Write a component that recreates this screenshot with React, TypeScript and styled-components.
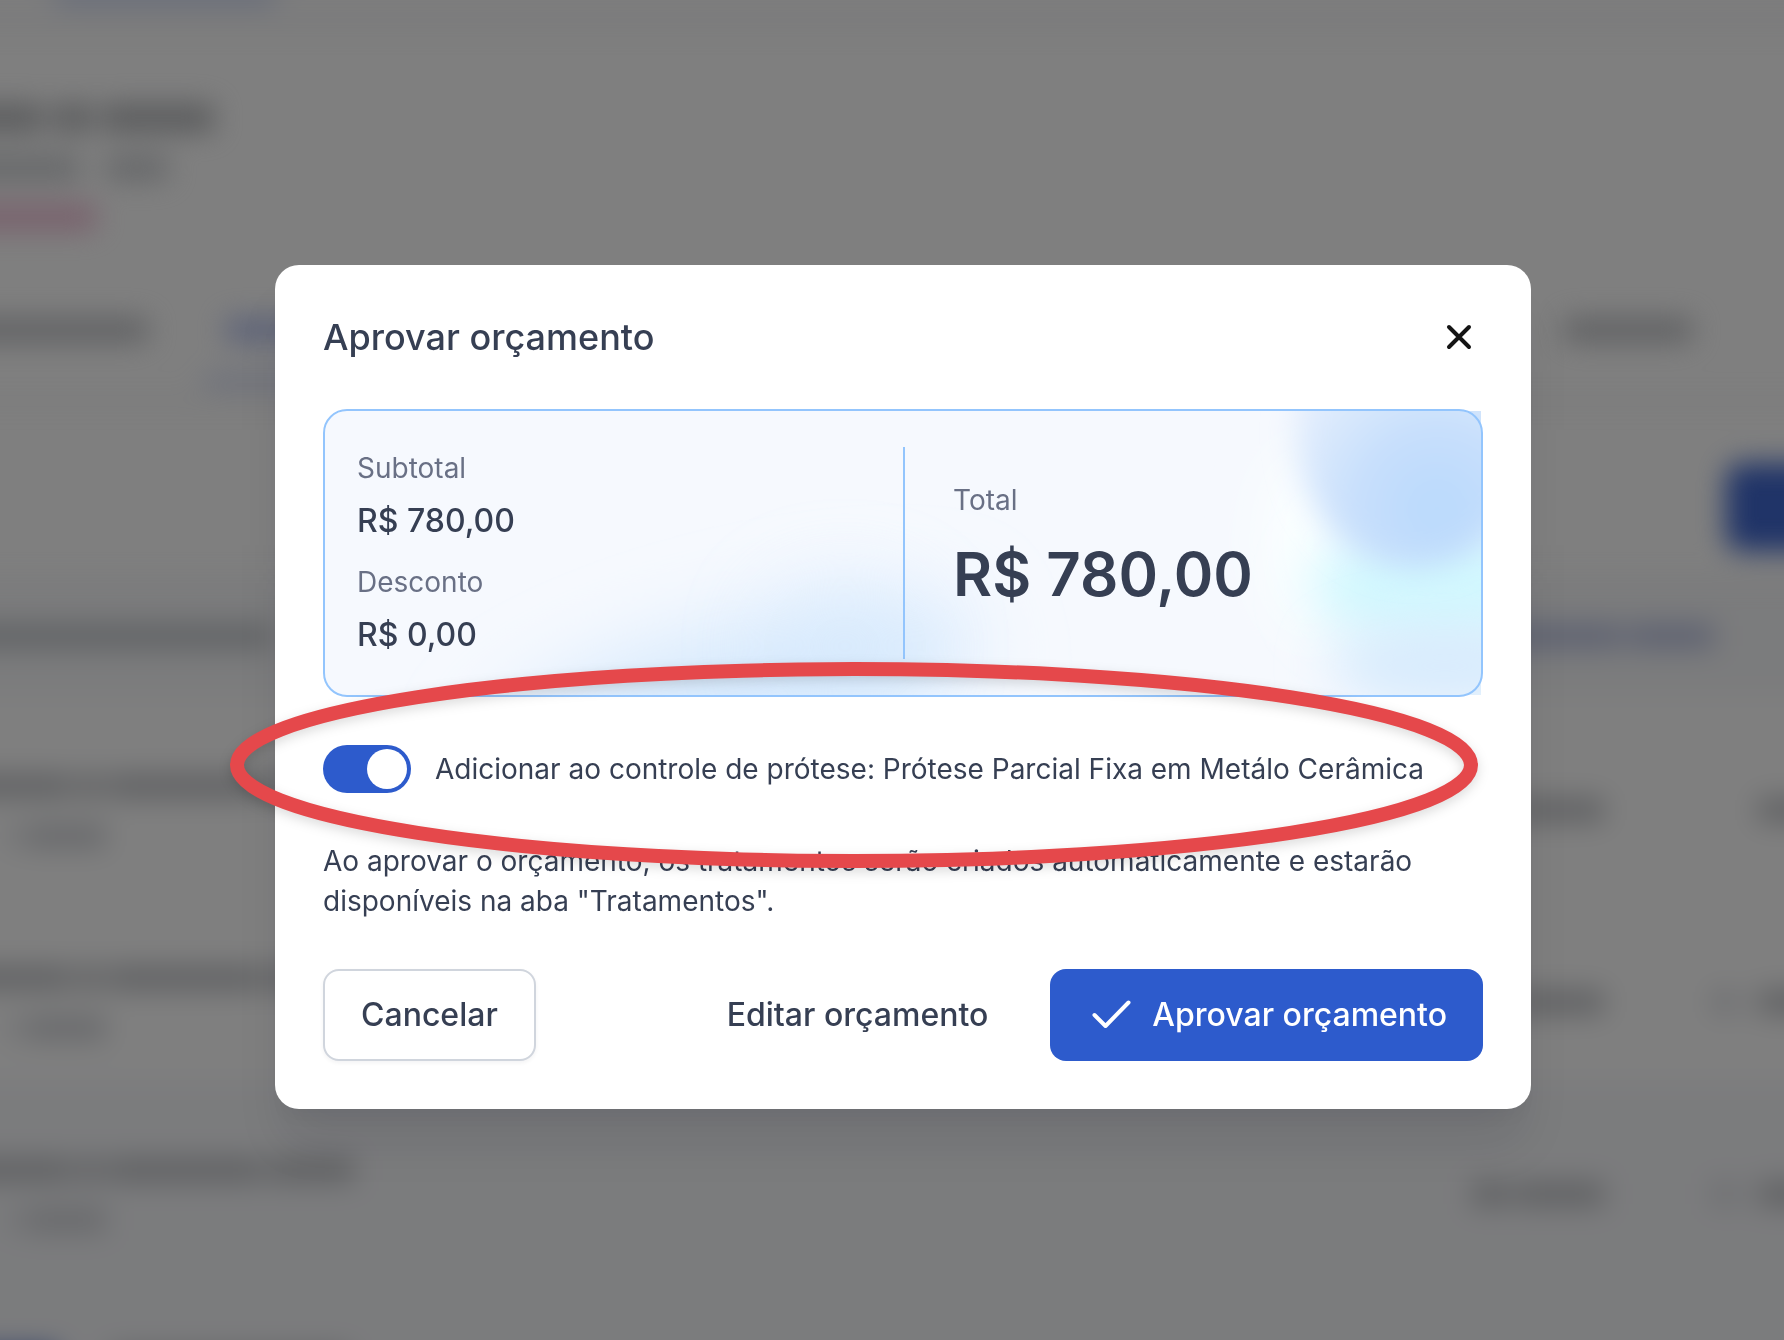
import React, { useState } from "react";
import styled, { createGlobalStyle } from "styled-components";

const GlobalStyle = createGlobalStyle`
  *, *::before, *::after { box-sizing: border-box; }
  body {
    margin: 0;
    background: #ffffff;
    color: #363f53;
    font-family: Inter, "Liberation Sans", sans-serif;
    -webkit-font-smoothing: antialiased;
  }
  button { font: inherit; color: inherit; }
`;

/* ---------- Page behind the dialog ---------- */

/* Bleeds past the window on every side so that the blur has no soft edge. */
const Page = styled.div`
  position: fixed;
  inset: -48px;
  display: flex;
  flex-direction: column;
  overflow: hidden;
  filter: blur(14px);
`;

const Topbar = styled.div`
  flex: none;
  display: flex;
  flex-direction: column;
  height: 78px;
  padding: 40px 0 0 103px;
  border-bottom: 2px solid #d9dbe0;
  background: #fafafb;
`;

const Profile = styled.div`
  flex: none;
  display: flex;
  flex-direction: column;
  gap: 24px;
  height: 288px;
  padding-top: 74px;
`;

const Tabs = styled.div`
  flex: none;
  display: flex;
  align-items: flex-start;
  justify-content: space-between;
  height: 84px;
  padding-right: 140px;
  border-bottom: 2px solid #d3d5db;
`;

const TabGroup = styled.div`
  display: flex;
  gap: 56px;
`;

const ActiveTab = styled.div`
  width: 180px;
  height: 66px;
  padding-left: 22px;
  border-bottom: 6px solid #9fb0ec;
`;

const Actions = styled.div`
  flex: none;
  display: flex;
  justify-content: flex-end;
  height: 174px;
  padding-top: 61px;
`;

const ActionButton = styled.div`
  width: 106px;
  height: 88px;
  border-radius: 16px 0 0 16px;
  background: #4068d0;
`;

const Banner = styled.div`
  flex: none;
  display: flex;
  align-items: center;
  justify-content: space-between;
  height: 120px;
  padding-right: 118px;
  background: #f7f8fa;
`;

const ListRow = styled.div<{ $tinted?: boolean }>`
  flex: none;
  display: flex;
  justify-content: space-between;
  height: 192px;
  padding-top: 78px;
  background: ${(p) => (p.$tinted ? "#f7f8fb" : "#ffffff")};
`;

const RowText = styled.div`
  display: flex;
  flex-direction: column;
  gap: 26px;
`;

const RowCells = styled.div`
  display: flex;
  gap: 108px;
  padding-top: 24px;
`;

const Words = styled.div<{ $gap?: number; $indent?: number }>`
  display: flex;
  gap: ${(p) => p.$gap ?? 6}px;
  padding-left: ${(p) => p.$indent ?? 0}px;
`;

const Bar = styled.div<{ $w: number; $h?: number; $c?: string }>`
  width: ${(p) => p.$w}px;
  height: ${(p) => p.$h ?? 24}px;
  background: ${(p) => p.$c ?? "#c0c2c6"};
`;

/* ---------- Dialog ---------- */

const Overlay = styled.div`
  position: fixed;
  inset: 0;
  display: grid;
  place-items: center;
  padding: 34px 0 0 22px;
  background: rgba(0, 0, 0, 0.5);
`;

const Dialog = styled.section`
  position: relative;
  display: flex;
  flex-direction: column;
  gap: 48px;
  width: 100%;
  max-width: 1256px;
  padding: 48px;
  border-radius: 24px;
  background: #ffffff;
  box-shadow:
    0 40px 48px -8px rgba(16, 24, 40, 0.1),
    0 16px 16px -8px rgba(16, 24, 40, 0.04);
`;

const Header = styled.header`
  display: flex;
  align-items: center;
  justify-content: space-between;
  height: 48px;
`;

const Title = styled.h2`
  margin: 0;
  font-size: 36px;
  font-weight: 500;
  line-height: 48px;
`;

const CloseButton = styled.button`
  display: flex;
  padding: 0;
  border: 0;
  background: none;
  color: #141414;
  cursor: pointer;
`;

const Summary = styled.div`
  position: relative;
`;

const Glow = styled.div`
  position: absolute;
  inset: 2px;
  overflow: hidden;
  border-radius: 22px 0 0 22px;
  background: #f6f9fe;

  svg {
    display: block;
    width: 100%;
    height: 100%;
  }
`;

const SummaryBody = styled.dl`
  position: relative;
  display: grid;
  grid-template-columns: 1fr 1fr;
  margin: 0;
  padding: 36px 32px;
  border: 2px solid #93c5fd;
  border-radius: 24px;
`;

const Amounts = styled.div`
  display: flex;
  flex-direction: column;
  gap: 16px;
`;

const Amount = styled.div`
  display: flex;
  flex-direction: column;
  gap: 8px;
`;

const TotalAmount = styled.div`
  display: flex;
  flex-direction: column;
  justify-content: center;
  padding-left: 48px;
  border-left: 2px solid #93c5fd;
`;

const Label = styled.dt`
  font-size: 28px;
  line-height: 42px;
  color: #697085;
`;

const Value = styled.dd`
  margin: 0;
  font-size: 32px;
  font-weight: 500;
  line-height: 48px;
`;

const TotalValue = styled.dd`
  margin: 0;
  font-size: 60px;
  font-weight: 600;
  line-height: 106px;
`;

const SwitchRow = styled.label`
  display: flex;
  align-items: center;
  gap: 24px;
  font-size: 28px;
  line-height: 48px;
  cursor: pointer;
`;

const Switch = styled.input`
  appearance: none;
  flex: none;
  display: flex;
  width: 88px;
  height: 48px;
  margin: 0;
  padding: 4px;
  border-radius: 24px;
  background: #d0d5dd;
  cursor: pointer;

  &::before {
    content: "";
    width: 40px;
    height: 40px;
    border-radius: 50%;
    background: #ffffff;
  }

  &:checked {
    justify-content: flex-end;
    background: #2d5bcc;
  }
`;

const Note = styled.p`
  margin: 0;
  font-size: 28px;
  line-height: 40px;
`;

const Footer = styled.footer`
  display: flex;
  align-items: center;
  justify-content: space-between;
`;

const FooterGroup = styled.div`
  display: flex;
  gap: 24px;
`;

const Button = styled.button`
  display: flex;
  align-items: center;
  gap: 16px;
  height: 92px;
  padding: 0 36px;
  border: 2px solid transparent;
  border-radius: 16px;
  background: transparent;
  font-size: 32px;
  font-weight: 500;
  line-height: 48px;
  white-space: nowrap;
  cursor: pointer;
`;

const OutlineButton = styled(Button)`
  border-color: #d0d5dd;
  background: #ffffff;
  box-shadow: 0 2px 4px rgba(16, 24, 40, 0.05);
`;

const PrimaryButton = styled(Button)`
  padding: 0 36px 0 38px;
  border: 0;
  background: #2d5bcc;
  color: #ffffff;
`;

/* Hand-placed highlight ring that lies over the switch row. */
const Ring = styled.svg`
  position: absolute;
  top: 388px;
  left: -54px;
  width: calc(100% + 8px);
  height: 224px;
  overflow: visible;
  pointer-events: none;
  filter: drop-shadow(0 4px 6px rgba(0, 0, 0, 0.14));
`;

const CloseIcon = () => (
  <svg width="48" height="48" viewBox="0 0 48 48" fill="none" aria-hidden="true">
    <path d="M14 14L34 34M34 14L14 34" stroke="currentColor" strokeWidth="4" strokeLinecap="round" />
  </svg>
);

const CheckIcon = () => (
  <svg width="48" height="48" viewBox="0 0 48 48" fill="none" aria-hidden="true">
    <path
      d="M6.5 24L17.5 35L40.5 11.5"
      stroke="currentColor"
      strokeWidth="4"
      strokeLinecap="round"
      strokeLinejoin="round"
    />
  </svg>
);

const SummaryGlow = () => (
  <svg viewBox="0 0 1156 284" preserveAspectRatio="xMaxYMid slice" aria-hidden="true">
    <defs>
      <filter id="blur-l" x="-80%" y="-200%" width="260%" height="500%">
        <feGaussianBlur stdDeviation="42" />
      </filter>
      <filter id="blur-m" x="-80%" y="-80%" width="260%" height="260%">
        <feGaussianBlur stdDeviation="26" />
      </filter>
      <filter id="blur-s" x="-40%" y="-40%" width="180%" height="180%">
        <feGaussianBlur stdDeviation="15" />
      </filter>
      <radialGradient id="orb" gradientUnits="userSpaceOnUse" cx="1112" cy="98" r="160">
        <stop offset="0" stopColor="#b9d9fc" />
        <stop offset="0.5" stopColor="#c7dffc" />
        <stop offset="1" stopColor="#e2edfd" />
      </radialGradient>
    </defs>
    <ellipse cx="410" cy="285" rx="250" ry="70" transform="rotate(-14 410 285)" fill="#d6e9fd" filter="url(#blur-l)" />
    <ellipse cx="520" cy="235" rx="80" ry="60" fill="#d6e9fd" opacity="0.5" filter="url(#blur-l)" />
    <ellipse cx="985" cy="130" rx="45" ry="90" fill="#fbffff" filter="url(#blur-m)" />
    <ellipse cx="1120" cy="175" rx="135" ry="65" fill="#d2f8fe" filter="url(#blur-m)" />
    <ellipse cx="1120" cy="255" rx="115" ry="42" fill="#d8ebfd" filter="url(#blur-m)" />
    <ellipse cx="1090" cy="22" rx="120" ry="136" fill="url(#orb)" filter="url(#blur-s)" />
  </svg>
);

const PageBehind = () => (
  <Page aria-hidden="true">
    <Topbar>
      <Bar $w={220} $h={10} $c="#a9bdf0" />
    </Topbar>
    <Profile>
      <Words $gap={10}>
        <Bar $w={92} $h={28} $c="#b6b8bb" />
        <Bar $w={38} $h={28} $c="#b6b8bb" />
        <Bar $w={112} $h={28} $c="#b6b8bb" />
      </Words>
      <Words $gap={26}>
        <Bar $w={128} $c="#cacdd1" />
        <Bar $w={62} $c="#cacdd1" />
      </Words>
      <Bar $w={144} $h={26} $c="#f2c0d8" />
    </Profile>
    <Tabs>
      <TabGroup>
        <Bar $w={196} />
        <ActiveTab>
          <Bar $w={130} $c="#b9c5f2" />
        </ActiveTab>
      </TabGroup>
      <Bar $w={128} />
    </Tabs>
    <Actions>
      <ActionButton />
    </Actions>
    <Banner>
      <Bar $w={320} $c="#c0c4c9" />
      <Words>
        <Bar $w={120} $c="#bac2e2" />
        <Bar $w={86} $c="#bac2e2" />
      </Words>
    </Banner>
    {[false, false, true].map((tinted, i) => (
      <ListRow key={i} $tinted={tinted}>
        <RowText>
          <Words>
            <Bar $w={120} />
            <Bar $w={24} />
            <Bar $w={154} />
            <Bar $w={86} />
          </Words>
          <Words $indent={54}>
            <Bar $w={14} $c="#e2e4e8" />
            <Bar $w={80} $c="#d0d2d7" />
          </Words>
        </RowText>
        <RowCells>
          <Words>
            <Bar $w={38} />
            <Bar $w={88} />
          </Words>
          <Words $gap={20}>
            <Bar $w={26} $c={i === 0 ? "#ffffff" : "#dcdee3"} />
            <Bar $w={74} />
          </Words>
        </RowCells>
      </ListRow>
    ))}
    <ListRow $tinted>
      <Words $gap={52}>
        <Bar $w={106} $h={50} $c="#3f63c0" />
        <Bar $w={240} />
      </Words>
    </ListRow>
  </Page>
);

export default function App() {
  const [addToControl, setAddToControl] = useState(true);

  return (
    <>
      <GlobalStyle />
      <PageBehind />
      <Overlay>
        <Dialog role="dialog" aria-modal="true" aria-labelledby="dialog-title">
          <Header>
            <Title id="dialog-title">Aprovar orçamento</Title>
            <CloseButton type="button" aria-label="Fechar">
              <CloseIcon />
            </CloseButton>
          </Header>

          <Summary>
            <Glow>
              <SummaryGlow />
            </Glow>
            <SummaryBody>
              <Amounts>
                <Amount>
                  <Label>Subtotal</Label>
                  <Value>R$ 780,00</Value>
                </Amount>
                <Amount>
                  <Label>Desconto</Label>
                  <Value>R$ 0,00</Value>
                </Amount>
              </Amounts>
              <TotalAmount>
                <Label>Total</Label>
                <TotalValue>R$ 780,00</TotalValue>
              </TotalAmount>
            </SummaryBody>
          </Summary>

          <SwitchRow>
            <Switch
              type="checkbox"
              role="switch"
              checked={addToControl}
              onChange={(e) => setAddToControl(e.target.checked)}
            />
            Adicionar ao controle de prótese: Prótese Parcial Fixa em Metálo Cerâmica
          </SwitchRow>

          <Note>
            Ao aprovar o orçamento, os tratamentos serão criados automaticamente e estarão
            disponíveis na aba "Tratamentos".
          </Note>

          <Footer>
            <OutlineButton type="button">Cancelar</OutlineButton>
            <FooterGroup>
              <Button type="button">Editar orçamento</Button>
              <PrimaryButton type="button">
                <CheckIcon />
                Aprovar orçamento
              </PrimaryButton>
            </FooterGroup>
          </Footer>

          <Ring viewBox="0 0 1264 224" preserveAspectRatio="none" aria-hidden="true">
            <ellipse cx="633" cy="112" rx="617" ry="96" fill="none" stroke="#e5484b" strokeWidth="14" />
          </Ring>
        </Dialog>
      </Overlay>
    </>
  );
}
